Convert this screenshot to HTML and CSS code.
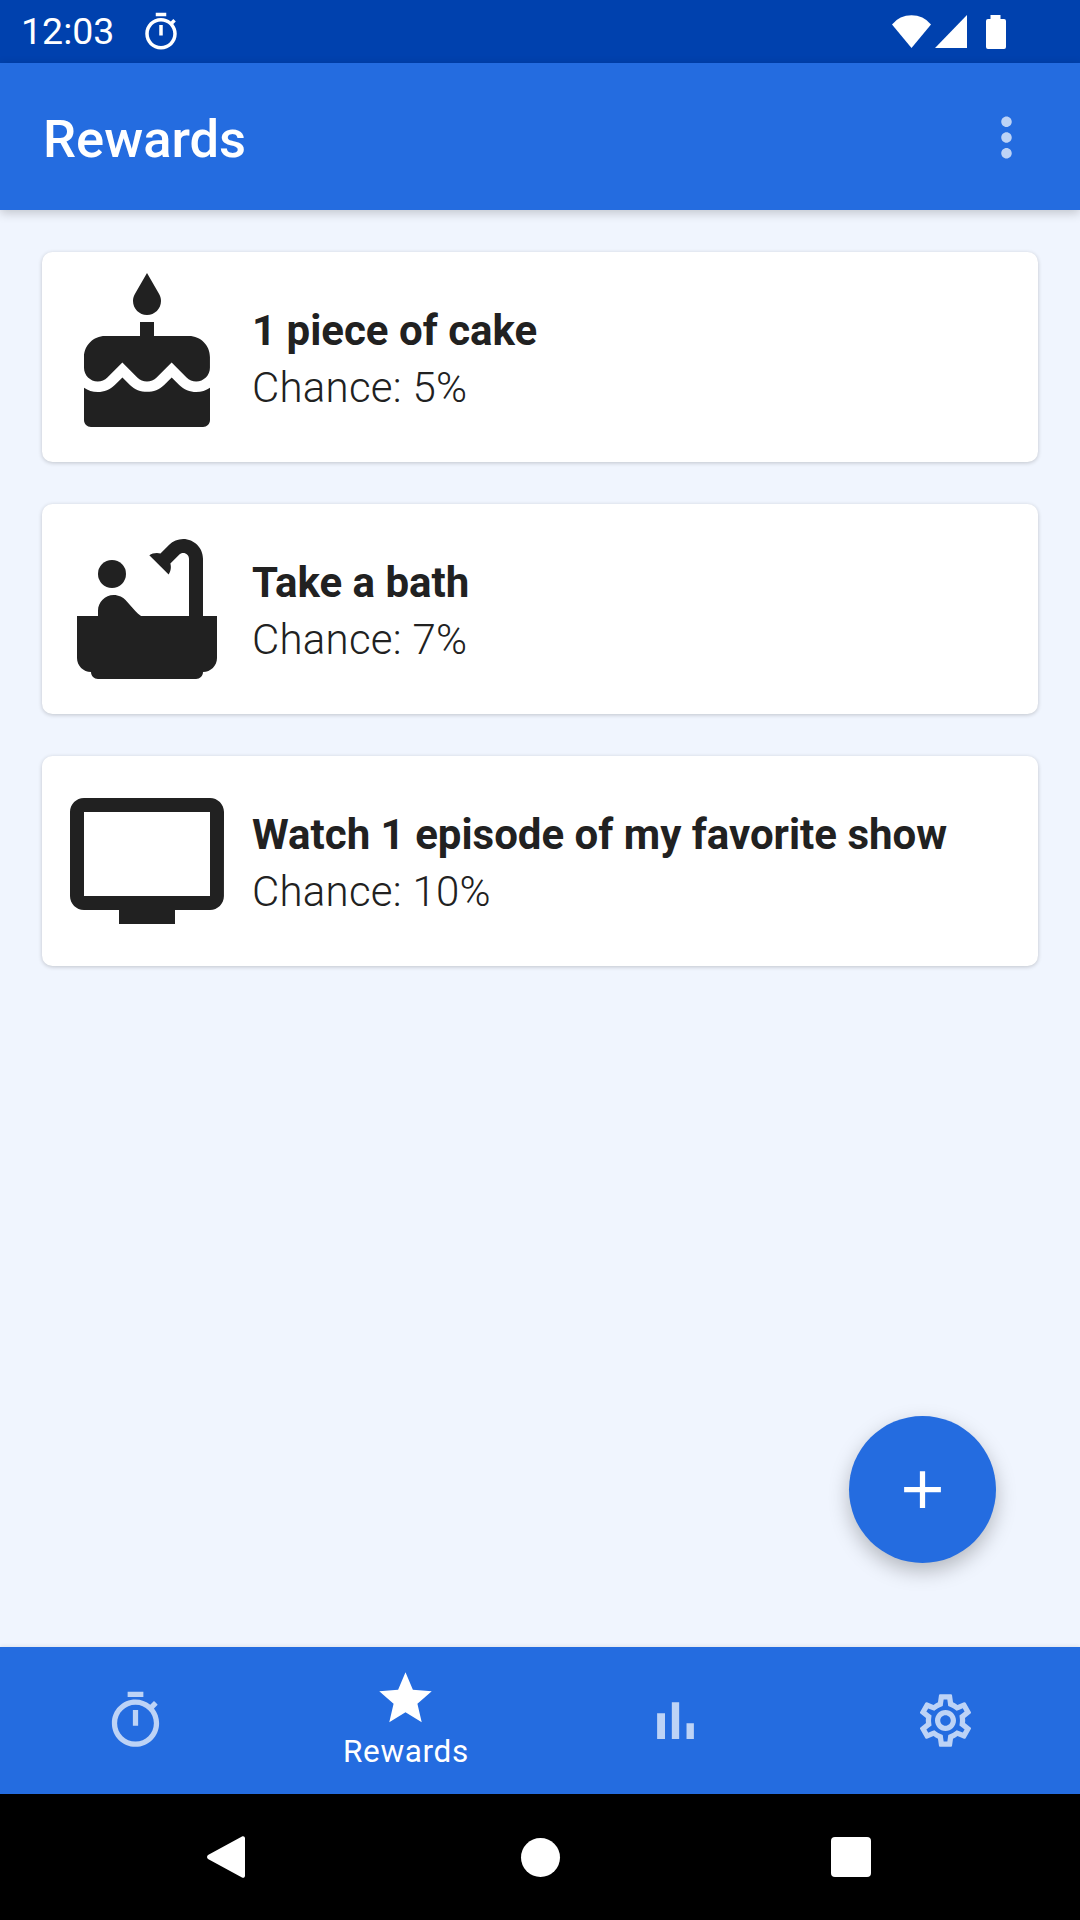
FILE: index.html
```html
<!DOCTYPE html>
<html lang="en">
<head>
    <meta charset="UTF-8">
    <title>Rewards</title>
    <link rel="stylesheet" href="styles.css">
</head>
<body>
    <div class="screen">
        <div class="status-bar">
            <div class="status-left">
                <span class="status-time">12:03</span>
                <svg class="status-timer" viewBox="0 0 24 24"><path d="M15 1H9v2h6V1zm-4 13h2V8h-2v6zm8.03-6.61l1.42-1.42c-.43-.51-.9-.99-1.41-1.41l-1.42 1.42C16.07 4.74 14.12 4 12 4c-4.97 0-9 4.03-9 9s4.02 9 9 9 9-4.03 9-9c0-2.12-.74-4.07-1.97-5.61zM12 20c-3.87 0-7-3.13-7-7s3.13-7 7-7 7 3.13 7 7-3.13 7-7 7z"/></svg>
            </div>
            <div class="status-right">
                <svg class="status-wifi" viewBox="0 0 39 33"><path d="M19.5 33L0 9.5A25 25 0 0 1 39 9.5z"/></svg>
                <svg class="status-signal" viewBox="0 0 32 33"><path d="M32 0V33H0z"/></svg>
                <svg class="status-battery" viewBox="0 0 20 34"><path d="M4.5 4V0h10v4h3.5a2 2 0 0 1 2 2v26a2 2 0 0 1-2 2H2a2 2 0 0 1-2-2V6a2 2 0 0 1 2-2z"/></svg>
            </div>
        </div>

        <header class="app-bar">
            <h1 class="app-title">Rewards</h1>
            <svg class="app-menu" viewBox="0 0 24 24"><path d="M12 8c1.1 0 2-.9 2-2s-.9-2-2-2-2 .9-2 2 .9 2 2 2zm0 2c-1.1 0-2 .9-2 2s.9 2 2 2 2-.9 2-2-.9-2-2-2zm0 6c-1.1 0-2 .9-2 2s.9 2 2 2 2-.9 2-2-.9-2-2-2z"/></svg>
        </header>

        <main class="content">
            <div class="card">
                <svg class="card-icon" viewBox="0 0 24 24"><path d="M12 6c1.11 0 2-.9 2-2 0-.38-.1-.73-.29-1.03L12 0l-1.71 2.97c-.19.3-.29.65-.29 1.03 0 1.1.9 2 2 2zm4.6 9.99l-1.07-1.07-1.08 1.07c-1.3 1.3-3.58 1.31-4.89 0l-1.07-1.07-1.09 1.07C6.75 16.64 5.88 17 4.96 17c-.73 0-1.4-.23-1.96-.61V21c0 .55.45 1 1 1h16c.55 0 1-.45 1-1v-4.61c-.56.38-1.23.61-1.96.61-.92 0-1.79-.36-2.44-1.01zM18 9h-5V7h-2v2H6c-1.66 0-3 1.34-3 3v1.54c0 1.08.88 1.96 1.96 1.96.52 0 1.02-.2 1.38-.57l2.14-2.13 2.13 2.13c.74.74 2.03.74 2.77 0l2.14-2.13 2.13 2.13c.37.37.86.57 1.38.57 1.08 0 1.96-.88 1.96-1.96V12C21 10.34 19.66 9 18 9z"/></svg>
                <div class="card-text">
                    <div class="card-title">1 piece of cake</div>
                    <div class="card-chance">Chance: 5%</div>
                </div>
            </div>
            <div class="card">
                <svg class="card-icon" viewBox="0 0 24 24"><circle cx="7" cy="7" r="2"/><path d="M20 13V4.83C20 3.27 18.73 2 17.17 2c-.75 0-1.47.3-2 .83l-1.25 1.25c-.16-.05-.33-.08-.51-.08-.4 0-.77.12-1.08.32l2.76 2.76c.2-.31.32-.68.32-1.08 0-.18-.03-.34-.07-.51l1.25-1.25c.15-.15.36-.24.58-.24.46 0 .83.37.83.83V13h-6.85c-.3-.21-.57-.45-.82-.72l-1.4-1.55c-.19-.21-.43-.38-.69-.5-.31-.15-.65-.23-1-.23C6 10.01 5 11.01 5 12.25V13H2v6c0 1.1.9 2 2 2 0 .55.45 1 1 1h14c.55 0 1-.45 1-1 1.1 0 2-.9 2-2v-6h-2z"/></svg>
                <div class="card-text">
                    <div class="card-title">Take a bath</div>
                    <div class="card-chance">Chance: 7%</div>
                </div>
            </div>
            <div class="card">
                <svg class="card-icon" viewBox="0 0 24 24"><path d="M21 3H3c-1.1 0-2 .9-2 2v12c0 1.1.9 2 2 2h5v2h8v-2h5c1.1 0 1.99-.9 1.99-2L23 5c0-1.1-.9-2-2-2zm0 14H3V5h18v12z"/></svg>
                <div class="card-text">
                    <div class="card-title">Watch 1 episode of my favorite show</div>
                    <div class="card-chance">Chance: 10%</div>
                </div>
            </div>

            <div class="fab">
                <svg class="fab-icon" viewBox="0 0 24 24"><path d="M19 13h-6v6h-2v-6H5v-2h6V5h2v6h6v2z"/></svg>
            </div>
        </main>

        <nav class="bottom-nav">
            <div class="nav-item">
                <svg class="nav-icon" viewBox="0 0 24 24"><path d="M15 1H9v2h6V1zm-4 13h2V8h-2v6zm8.03-6.61l1.42-1.42c-.43-.51-.9-.99-1.41-1.41l-1.42 1.42C16.07 4.74 14.12 4 12 4c-4.97 0-9 4.03-9 9s4.02 9 9 9 9-4.03 9-9c0-2.12-.74-4.07-1.97-5.61zM12 20c-3.87 0-7-3.13-7-7s3.13-7 7-7 7 3.13 7 7-3.13 7-7 7z"/></svg>
            </div>
            <div class="nav-item nav-item-active">
                <svg class="nav-icon" viewBox="0 0 24 24"><path d="M12 17.27L18.18 21l-1.64-7.03L22 9.24l-7.19-.61L12 2 9.19 8.63 2 9.24l5.46 4.73L5.82 21z"/></svg>
                <span class="nav-label">Rewards</span>
            </div>
            <div class="nav-item">
                <svg class="nav-icon" viewBox="0 0 24 24"><path d="M5 9.2h3V19H5zM10.6 5h2.8v14h-2.8zm5.6 8H19v6h-2.8z"/></svg>
            </div>
            <div class="nav-item">
                <svg class="nav-icon" viewBox="0 0 24 24"><path d="M19.43 12.98c.04-.32.07-.64.07-.98 0-.34-.03-.66-.07-.98l2.11-1.65c.19-.15.24-.42.12-.64l-2-3.46c-.09-.16-.26-.25-.44-.25-.06 0-.12.01-.17.03l-2.49 1c-.52-.4-1.08-.73-1.69-.98l-.38-2.65C14.46 2.18 14.25 2 14 2h-4c-.25 0-.46.18-.49.42l-.38 2.65c-.61.25-1.17.59-1.69.98l-2.49-1c-.06-.02-.12-.03-.18-.03-.17 0-.34.09-.43.25l-2 3.46c-.13.22-.07.49.12.64l2.11 1.65c-.04.32-.07.65-.07.98 0 .33.03.66.07.98l-2.11 1.65c-.19.15-.24.42-.12.64l2 3.46c.09.16.26.25.44.25.06 0 .12-.01.17-.03l2.49-1c.52.4 1.08.73 1.69.98l.38 2.65c.03.24.24.42.49.42h4c.25 0 .46-.18.49-.42l.38-2.65c.61-.25 1.17-.59 1.69-.98l2.49 1c.06.02.12.03.18.03.17 0 .34-.09.43-.25l2-3.46c.12-.22.07-.49-.12-.64l-2.11-1.65zm-1.98-1.71c.04.31.05.52.05.73 0 .21-.02.43-.05.73l-.14 1.13.89.7 1.08.84-.7 1.21-1.27-.51-1.04-.42-.9.68c-.43.32-.84.56-1.25.73l-1.06.43-.16 1.13-.2 1.35h-1.4l-.19-1.35-.16-1.13-1.06-.43c-.43-.18-.83-.41-1.23-.71l-.91-.7-1.06.43-1.27.51-.7-1.21 1.08-.84.89-.7-.14-1.13c-.03-.31-.05-.54-.05-.74s.02-.43.05-.73l.14-1.13-.89-.7-1.08-.84.7-1.21 1.27.51 1.04.42.9-.68c.43-.32.84-.56 1.25-.73l1.06-.43.16-1.13.2-1.35h1.39l.19 1.35.16 1.13 1.06.43c.43.18.83.41 1.23.71l.91.7 1.06-.43 1.27-.51.7 1.21-1.07.85-.89.7.14 1.13zM12 8c-2.21 0-4 1.79-4 4s1.79 4 4 4 4-1.79 4-4-1.79-4-4-4zm0 6c-1.1 0-2-.9-2-2s.9-2 2-2 2 .9 2 2-.9 2-2 2z"/></svg>
            </div>
        </nav>

        <div class="system-nav">
            <svg class="sys-back" viewBox="0 0 38 42"><path d="M35 .6c1.4-.9 3 .1 3 1.7v37.4c0 1.6-1.6 2.6-3 1.7L1 23c-1.3-.8-1.3-3 0-3.9z"/></svg>
            <div class="sys-home"></div>
            <div class="sys-recent"></div>
        </div>
    </div>
</body>
</html>
```

FILE: styles.css
```css
body, html {
    margin: 0;
    padding: 0;
    width: 1080px;
    height: 1920px;
    overflow: hidden;
    font-family: Roboto, Arial, sans-serif;
}

.screen {
    display: flex;
    flex-direction: column;
    width: 1080px;
    height: 1920px;
    background-color: #f0f5fe;
}

/* Status bar */
.status-bar {
    display: flex;
    justify-content: space-between;
    align-items: center;
    height: 63px;
    padding: 0 74px 0 21px;
    background-color: #0041ae;
    color: white;
}

.status-left {
    display: flex;
    align-items: center;
    gap: 26px;
}

.status-time {
    font-size: 37.5px;
    line-height: 65px;
}

.status-timer {
    width: 42px;
    height: 42px;
    margin-top: 1px;
    fill: white;
}

.status-right {
    display: flex;
    align-items: center;
}

.status-wifi {
    width: 39px;
    height: 33px;
    margin-right: 4px;
    fill: white;
}

.status-signal {
    width: 32px;
    height: 33px;
    margin-right: 19px;
    fill: white;
}

.status-battery {
    width: 20px;
    height: 34px;
    fill: white;
}

/* App bar */
.app-bar {
    display: flex;
    justify-content: space-between;
    align-items: center;
    height: 147px;
    padding: 0 42px 0 43px;
    background-color: #246ce0;
    box-shadow: 0 3px 10px rgba(0, 0, 0, 0.2);
    position: relative;
}

.app-title {
    margin: 4px 0 0;
    font-size: 52.5px;
    font-weight: 500;
    color: white;
}

.app-menu {
    width: 63px;
    height: 63px;
    margin-top: 2px;
    fill: rgba(255, 255, 255, 0.7);
}

/* Content */
.content {
    flex: 1;
    display: flex;
    flex-direction: column;
    gap: 42px;
    padding: 42px;
    position: relative;
}

.card {
    display: flex;
    align-items: center;
    gap: 21px;
    height: 210px;
    padding: 0 21px;
    box-sizing: border-box;
    background-color: white;
    border-radius: 10.5px;
    box-shadow: 0 1px 4px rgba(0, 0, 0, 0.2);
}

.card-icon {
    width: 168px;
    height: 168px;
    flex-shrink: 0;
    fill: #212121;
}

.card-text {
    margin-top: 4px;
}

.card-title {
    font-size: 42px;
    line-height: 57px;
    font-weight: 700;
    color: #212121;
}

.card-chance {
    font-size: 42px;
    line-height: 57px;
    font-weight: 300;
    letter-spacing: 0.25px;
    color: #212121;
}

.fab {
    position: absolute;
    right: 84px;
    bottom: 84px;
    display: flex;
    justify-content: center;
    align-items: center;
    width: 147px;
    height: 147px;
    border-radius: 50%;
    background-color: #246ce0;
    box-shadow: 0 8px 20px rgba(0, 0, 0, 0.25);
}

.fab-icon {
    width: 63px;
    height: 63px;
    fill: white;
}

/* Bottom navigation */
.bottom-nav {
    display: grid;
    grid-template-columns: repeat(4, 1fr);
    height: 147px;
    background-color: #246ce0;
    box-shadow: 0 -1px 4px rgba(0, 0, 0, 0.08);
    position: relative;
}

.nav-item {
    display: flex;
    flex-direction: column;
    align-items: center;
    padding-top: 42px;
    box-sizing: border-box;
}

.nav-item-active {
    padding-top: 20px;
}

.nav-icon {
    width: 63px;
    height: 63px;
    fill: rgba(255, 255, 255, 0.7);
}

.nav-item-active .nav-icon {
    fill: white;
}

.nav-label {
    margin-left: 2px;
    font-size: 31.5px;
    line-height: 44px;
    color: white;
    letter-spacing: 0.65px;
}

/* System navigation */
.system-nav {
    display: flex;
    justify-content: space-between;
    align-items: center;
    height: 126px;
    padding: 0 209px 0 207px;
    background-color: black;
}

.sys-back {
    width: 38px;
    height: 42px;
    fill: white;
}

.sys-home {
    width: 39px;
    height: 39px;
    margin-left: 5px;
    border-radius: 50%;
    background-color: white;
}

.sys-recent {
    width: 40px;
    height: 40px;
    border-radius: 4px;
    background-color: white;
}
```
